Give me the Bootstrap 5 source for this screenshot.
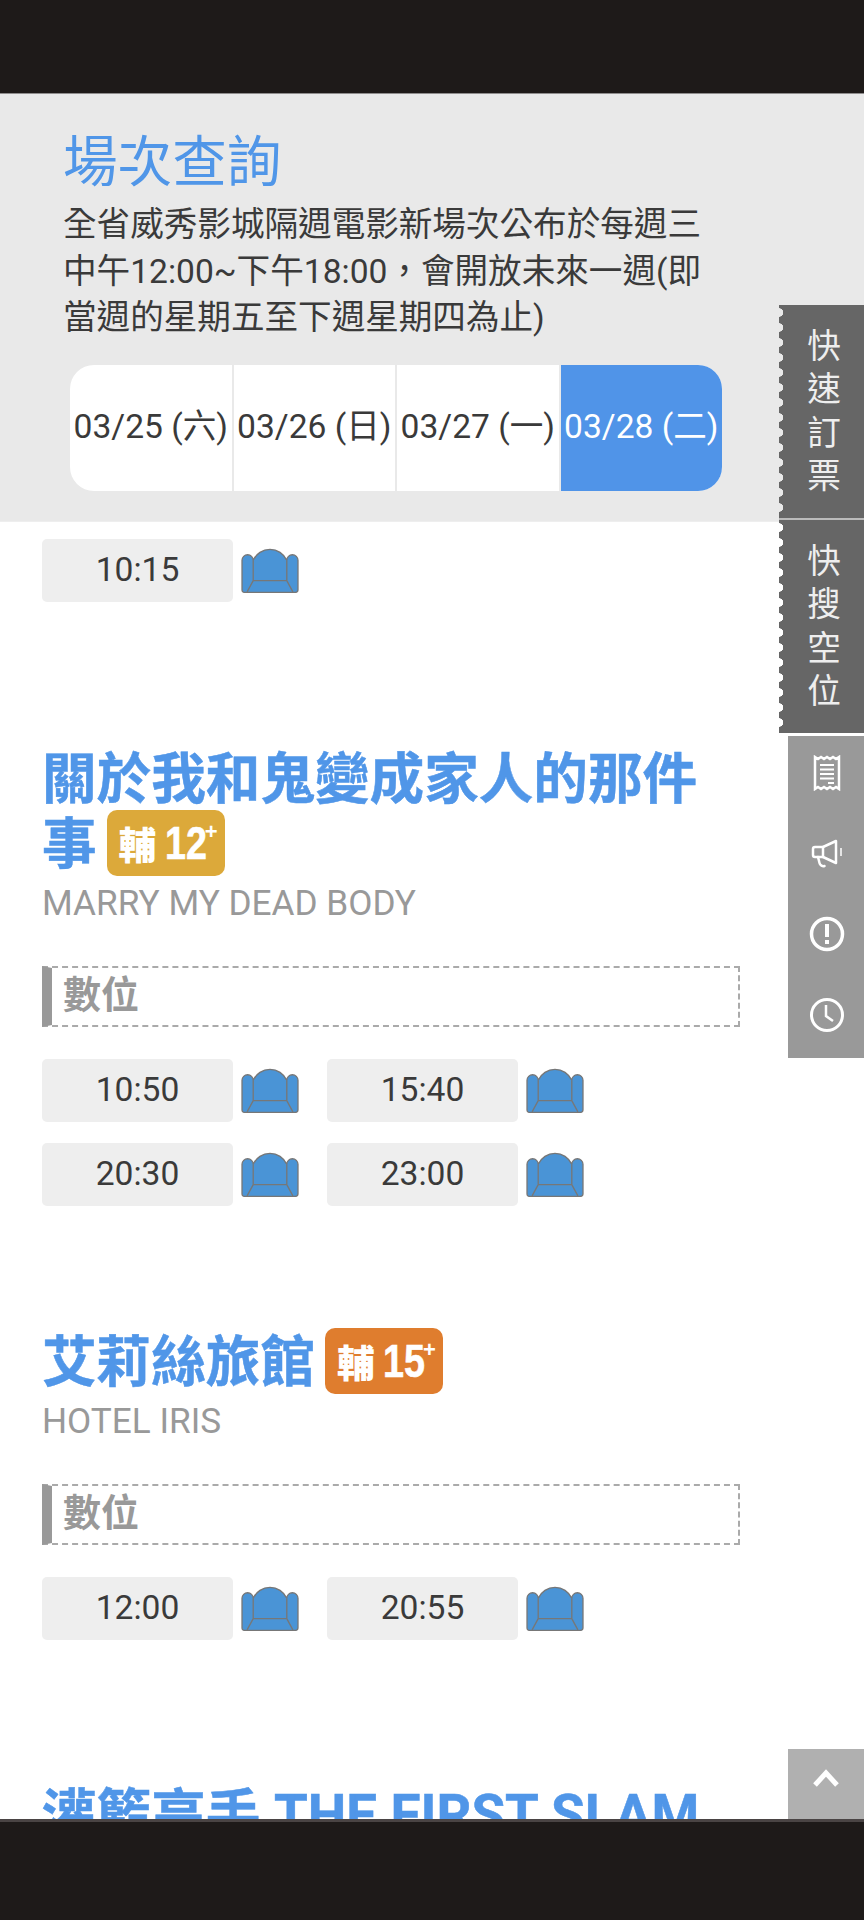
<!DOCTYPE html>
<html lang="zh-Hant">

<head>
  <meta charset="UTF-8">
  <title>場次查詢</title>
  <link href="https://cdn.jsdelivr.net/npm/bootstrap@5.3.3/dist/css/bootstrap.min.css" rel="stylesheet">
  <style>
    html, body { height: 1920px; overflow: hidden; }
    body { font-family: Roboto, "Noto Sans CJK TC", sans-serif; color: #3a3a3a; background: #fff; }

    .phone-top { height: 94px; background: #1e1a19; border-bottom: 1px solid #8f8d8d; }
    .phone-bottom { height: 101px; background: #1e1a19; border-top: 3px solid #4a4444; }
    .page-area { height: 1725px; }

    .query-panel { background: #e9e9e9; padding: 34px 0 30px; border-bottom: 1px solid #eee; }
    .query-title { font-size: 54.6px; line-height: 68px; font-weight: 400; color: #5096e8; margin: 0 0 6px 63px; }
    .query-desc { font-size: 33.6px; line-height: 46.5px; width: 650px; margin: 0 0 23px 63px; }
    .date-tabs { margin-left: 70px; width: 652px; height: 126px; border-radius: 24px; background: #fff; }
    .date-tab { flex: 1 1 0; font-size: 33.6px; color: #3a3a3a; text-decoration: none; white-space: nowrap; border-right: 2px solid #e9e9e9; }
    .date-tab.is-on { background: #5094e8; color: #fff; border-right: 0; }

    .film-list { padding-left: 42px; }
    .film-name { font-size: 54.6px; line-height: 65px; font-weight: 700; color: #5096e8; margin: 0; width: 680px; -webkit-text-stroke: .5px #5096e8; }
    .film-en { font-size: 35.2px; line-height: 48px; color: #999; padding-top: 2px; }
    .film-one { margin-top: 145px; }
    .film-two { margin-top: 124px; }
    .film-three { margin-top: 143px; }

    .rate-tag { display: inline-flex; align-items: center; width: 118px; height: 66px; padding-left: 12px; border-radius: 10px; color: #fff; font-family: "Liberation Sans", "Noto Sans CJK TC", sans-serif; font-weight: 700; vertical-align: top; margin: -2px 0 0 10px; -webkit-text-stroke: 0; }
    .rate-12 { background: #dca93a; }
    .rate-15 { background: #df7d2e; }
    .rate-tag b { font-size: 38px; line-height: 1; margin-right: 8px; font-family: "Noto Sans CJK TC", sans-serif; font-weight: 900; }
    .rate-tag i { display: inline-block; width: 40px; font-style: normal; font-size: 46px; line-height: 1; transform: scaleX(.82); transform-origin: left center; -webkit-text-stroke: .6px #fff; }
    .rate-tag em { font-style: normal; font-size: 22px; line-height: 1; margin: -22px 0 0 0; }

    .format-box { width: 698px; height: 61px; margin-top: 39px; border: 2px dashed #aaa; border-left: 10px solid #999; padding-left: 11px; font-size: 38px; line-height: 54px; font-weight: 700; color: #999; }

    .time-rows { width: 570px; margin-top: 32px; row-gap: 21px; }
    .first-times { margin-top: 17px; }
    .time-cell { width: 285px; gap: 8px; }
    .time-btn { width: 191px; height: 63px; border-radius: 5px; background: #eee; color: #3a3a3a; font-size: 33.6px; text-decoration: none; }
    .seat-icon { width: 58px; height: 45px; }

    .side-tools { top: 211px; right: 0; width: 85px; }
    .side-tab { height: 213px; background: #666; color: #eee; font-size: 33.6px; line-height: 43.3px; padding-left: 6px; }
    .side-tab.on-white { height: 215px; border-top: 2px solid #bbb; }
    .side-tab::before { content: ""; position: absolute; left: 0; top: 0; bottom: 0; width: 7px; background: radial-gradient(circle at 0 50%, #e9e9e9 4px, transparent 4.500px) 0 0 / 7px 15px repeat-y; }
    .side-tab.on-white::before { background-image: radial-gradient(circle at 0 50%, #fff 4px, transparent 4.500px); }
    .side-tab span { width: 1em; text-align: center; margin-left: -1px; }
    .side-icons { width: 76px; height: 322px; margin: 3px 0 0 9px; background: #999; }
    .side-icons a { height: 80.5px; padding: 0 0 6px 2px; }
    .go-top { right: 0; bottom: 0; width: 76px; height: 70px; background: #b0b0b0; padding-bottom: 12px; }
  </style>
</head>

<body>
  <div class="phone-top"></div>

  <div class="page-area position-relative overflow-hidden">
    <section class="query-panel">
      <h1 class="query-title">場次查詢</h1>
      <p class="query-desc">全省威秀影城隔週電影新場次公布於每週三中午12:00~下午18:00，會開放未來一週(即當週的星期五至下週星期四為止)</p>
      <div class="date-tabs d-flex overflow-hidden">
        <a class="date-tab d-flex align-items-center justify-content-center" href="#">03/25 (六)</a>
        <a class="date-tab d-flex align-items-center justify-content-center" href="#">03/26 (日)</a>
        <a class="date-tab d-flex align-items-center justify-content-center" href="#">03/27 (一)</a>
        <a class="date-tab is-on d-flex align-items-center justify-content-center" href="#">03/28 (二)</a>
      </div>
    </section>

    <svg width="0" height="0" class="position-absolute">
      <symbol id="seat" viewBox="0 0 57 44">
        <path d="M1 41V12a5.500 5.500 0 0 1 11 0A18 18 0 0 1 45 12a5.500 5.500 0 0 1 11 0v29a2.500 2.500 0 0 1-2.500 2.500H3.500A2.500 2.500 0 0 1 1 41z" fill="#4a94d6" stroke="#777" stroke-width="1.300"/>
        <path d="M12 12v20M45 12v20M12 32h33M12 32L6 43M45 32l6 11" fill="none" stroke="#777" stroke-width="1.300"/>
      </symbol>
    </svg>

    <div class="film-list">
      <div class="time-rows first-times d-flex flex-wrap">
        <div class="time-cell d-flex align-items-center">
          <a class="time-btn d-flex align-items-center justify-content-center" href="#">10:15</a>
          <svg class="seat-icon"><use href="#seat"/></svg>
        </div>
      </div>

      <h2 class="film-name film-one">關於我和鬼變成家人的那件事<span class="rate-tag rate-12"><b>輔</b><i>12</i><em>+</em></span></h2>
      <div class="film-en">MARRY MY DEAD BODY</div>
      <div class="format-box">數位</div>
      <div class="time-rows d-flex flex-wrap">
        <div class="time-cell d-flex align-items-center">
          <a class="time-btn d-flex align-items-center justify-content-center" href="#">10:50</a>
          <svg class="seat-icon"><use href="#seat"/></svg>
        </div>
        <div class="time-cell d-flex align-items-center">
          <a class="time-btn d-flex align-items-center justify-content-center" href="#">15:40</a>
          <svg class="seat-icon"><use href="#seat"/></svg>
        </div>
        <div class="time-cell d-flex align-items-center">
          <a class="time-btn d-flex align-items-center justify-content-center" href="#">20:30</a>
          <svg class="seat-icon"><use href="#seat"/></svg>
        </div>
        <div class="time-cell d-flex align-items-center">
          <a class="time-btn d-flex align-items-center justify-content-center" href="#">23:00</a>
          <svg class="seat-icon"><use href="#seat"/></svg>
        </div>
      </div>

      <h2 class="film-name film-two">艾莉絲旅館<span class="rate-tag rate-15"><b>輔</b><i>15</i><em>+</em></span></h2>
      <div class="film-en">HOTEL IRIS</div>
      <div class="format-box">數位</div>
      <div class="time-rows d-flex flex-wrap">
        <div class="time-cell d-flex align-items-center">
          <a class="time-btn d-flex align-items-center justify-content-center" href="#">12:00</a>
          <svg class="seat-icon"><use href="#seat"/></svg>
        </div>
        <div class="time-cell d-flex align-items-center">
          <a class="time-btn d-flex align-items-center justify-content-center" href="#">20:55</a>
          <svg class="seat-icon"><use href="#seat"/></svg>
        </div>
      </div>

      <h2 class="film-name film-three">灌籃高手 THE FIRST SLAM DUNK</h2>
    </div>

    <aside class="side-tools position-absolute">
      <a class="side-tab position-relative d-flex align-items-center justify-content-center text-decoration-none"><span>快速訂票</span></a>
      <a class="side-tab on-white position-relative d-flex align-items-center justify-content-center text-decoration-none"><span>快搜空位</span></a>
      <div class="side-icons d-flex flex-column">
        <a class="d-flex align-items-center justify-content-center" href="#">
          <svg width="28" height="36" viewBox="0 0 28 36" fill="none" stroke="#fff" stroke-width="2.500">
            <path d="M2 2l3 2 3-2 3 2 3-2 3 2 3-2 3 2 3-2V34l-3-2-3 2-3-2-3 2-3-2-3 2-3-2-3 2z"/>
            <path d="M7 10h14M7 14.500h14M7 19h14M7 23.500h14M15 28h6" stroke-width="2"/>
          </svg>
        </a>
        <a class="d-flex align-items-center justify-content-center" href="#">
          <svg width="32" height="30" viewBox="0 0 32 30" fill="none" stroke="#fff" stroke-width="2.500" stroke-linejoin="round">
            <path d="M25 2v22L12 18H4a2 2 0 0 1-2-2V10a2 2 0 0 1 2-2h8z"/>
            <path d="M12 8v10M7 18l1.500 6c.5 2.500 3 3.500 5 3" stroke-linecap="round"/>
            <path d="M30 9v8" stroke-width="1.500"/>
          </svg>
        </a>
        <a class="d-flex align-items-center justify-content-center" href="#">
          <svg width="36" height="36" viewBox="0 0 36 36" fill="none" stroke="#fff">
            <circle cx="18" cy="18" r="15.500" stroke-width="3.500"/>
            <path d="M18 8v13" stroke-width="4"/>
            <path d="M18 24v4" stroke-width="4"/>
          </svg>
        </a>
        <a class="d-flex align-items-center justify-content-center" href="#">
          <svg width="36" height="36" viewBox="0 0 36 36" fill="none" stroke="#fff">
            <circle cx="18" cy="18" r="15.500" stroke-width="3"/>
            <path d="M17 8v11l7 5" stroke-width="2.500"/>
          </svg>
        </a>
      </div>
    </aside>

    <a class="go-top position-absolute d-flex align-items-center justify-content-center" href="#">
      <svg width="26" height="18" viewBox="0 0 26 18" fill="none" stroke="#fff" stroke-width="5"><path d="M2 16L13 4l11 12"/></svg>
    </a>
  </div>

  <div class="phone-bottom"></div>

  <script src="https://cdn.jsdelivr.net/npm/bootstrap@5.3.3/dist/js/bootstrap.bundle.min.js"></script>
</body>

</html>
